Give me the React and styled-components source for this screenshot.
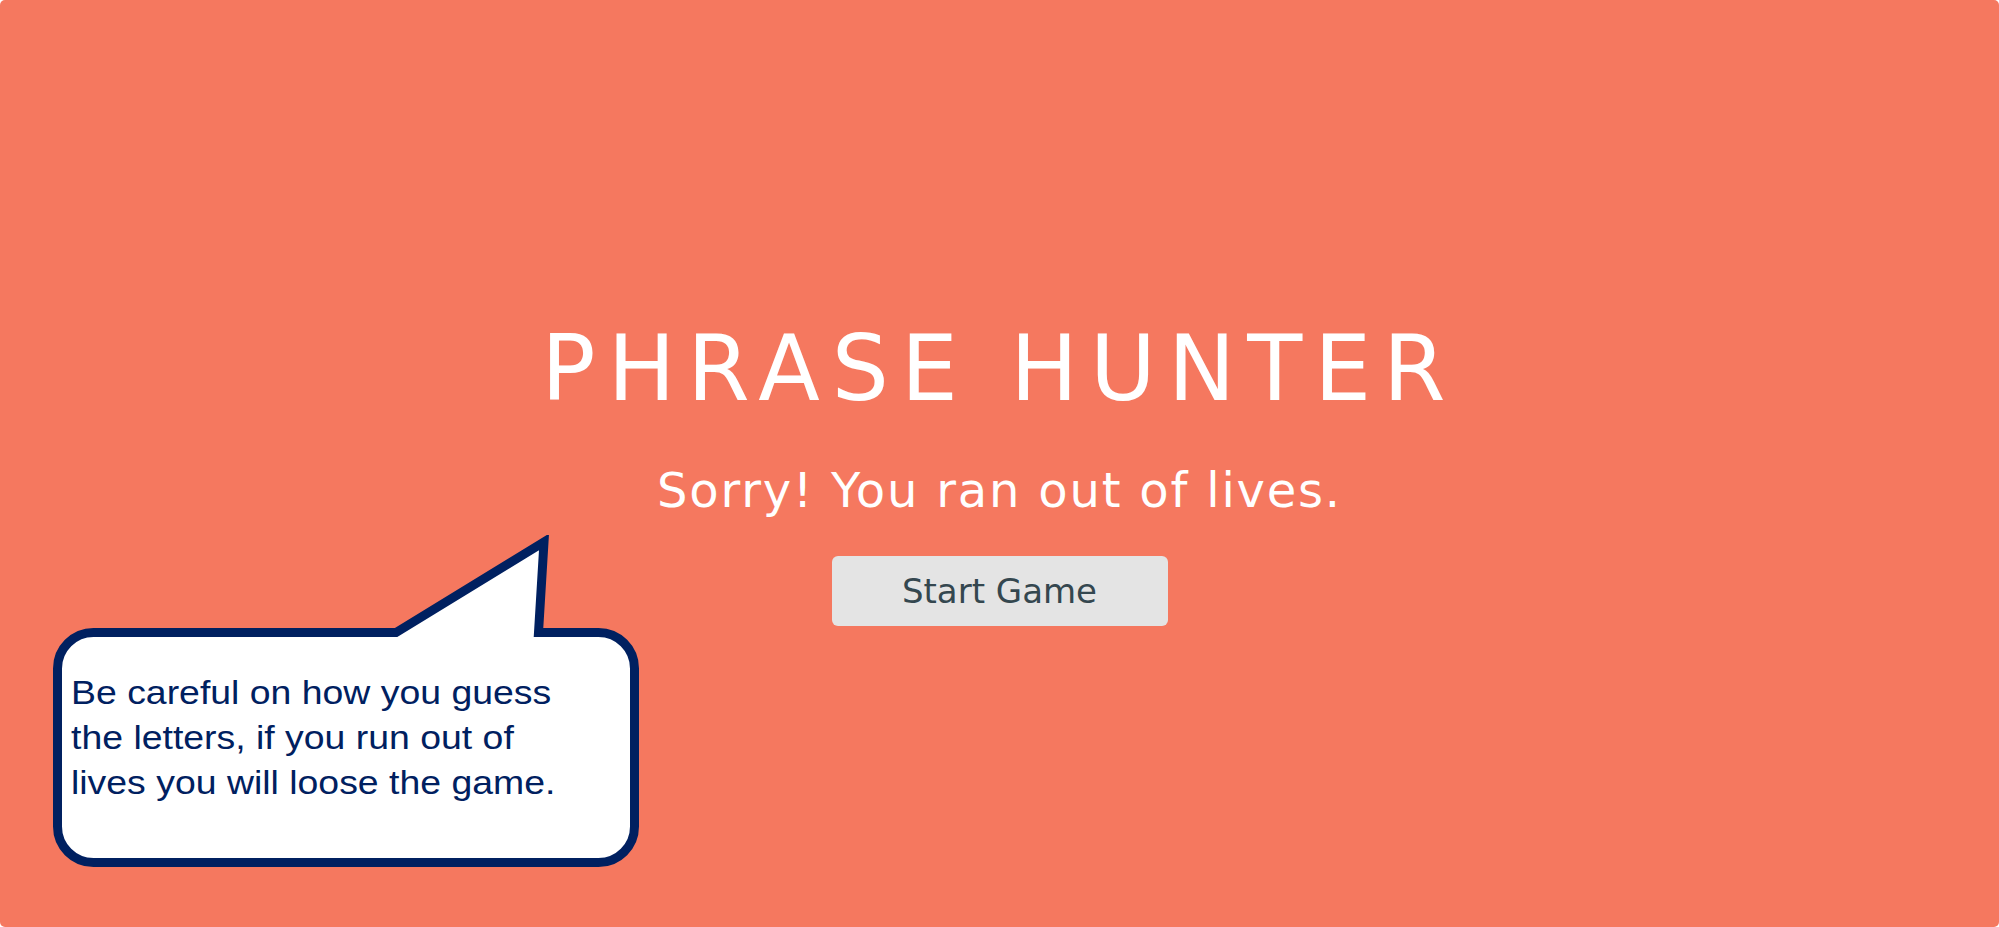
import React from 'react';
import styled, { createGlobalStyle } from 'styled-components';

const GlobalStyle = createGlobalStyle`
  html, body {
    margin: 0;
    padding: 0;
    background: #ffffff;
  }
  * {
    box-sizing: border-box;
  }
`;

const Overlay = styled.div`
  position: relative;
  width: 100vw;
  height: 100vh;
  padding-top: 324px;
  display: flex;
  flex-direction: column;
  align-items: center;
  justify-content: flex-start;
  background-color: #f5785f;
  border-radius: 5px;
  overflow: hidden;
  font-family: "DejaVu Sans", "Liberation Sans", sans-serif;
`;

const Title = styled.h2`
  margin: 0;
  font-size: 90px;
  line-height: 1;
  font-weight: 400;
  letter-spacing: 12px;
  color: #ffffff;
`;

const Message = styled.h1`
  margin: 52px 0 0;
  font-size: 48px;
  line-height: 1;
  font-weight: 400;
  letter-spacing: 1.8px;
  color: #ffffff;
`;

const StartButton = styled.button`
  margin-top: 42px;
  width: 336px;
  height: 70px;
  border: none;
  border-radius: 6px;
  background-color: #e4e4e4;
  color: #34474f;
  font-family: "DejaVu Sans", "Liberation Sans", sans-serif;
  font-size: 34px;
  cursor: pointer;
`;

const Bubble = styled.div`
  position: absolute;
  left: 53px;
  top: 535px;
  width: 586px;
  height: 332px;
  padding: 135px 0 0 18px;
`;

const BubbleShape = styled.svg`
  position: absolute;
  inset: 0;
  width: 100%;
  height: 100%;
`;

const BubbleText = styled.p`
  position: relative;
  margin: 0;
  font-family: "Liberation Sans", Arial, sans-serif;
  font-size: 34px;
  line-height: 45px;
  color: #002060;
  transform: scaleX(1.1);
  transform-origin: left top;
`;

function App() {
  return (
    <>
      <GlobalStyle />
      <Overlay>
        <Title>PHRASE HUNTER</Title>
        <Message>Sorry! You ran out of lives.</Message>
        <StartButton>Start Game</StartButton>
        <Bubble>
          <BubbleShape viewBox="0 0 586 332">
            <path
              d="M 40.5 97.5 H 343 L 491 7 L 485.5 97.5 H 545.5 A 36 36 0 0 1 581.5 133.5 V 291.5 A 36 36 0 0 1 545.5 327.5 H 40.5 A 36 36 0 0 1 4.5 291.5 V 133.5 A 36 36 0 0 1 40.5 97.5 Z"
              fill="#ffffff"
              stroke="#002060"
              strokeWidth="9"
              strokeLinejoin="miter"
            />
          </BubbleShape>
          <BubbleText>
            Be careful on how you guess
            <br />
            the letters, if you run out of
            <br />
            lives you will loose the game.
          </BubbleText>
        </Bubble>
      </Overlay>
    </>
  );
}

export default App;
